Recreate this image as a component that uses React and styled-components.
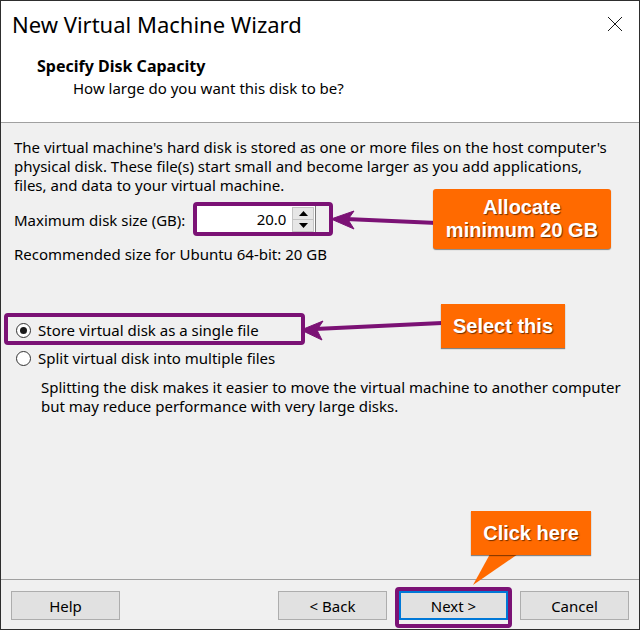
import React from 'react';
import styled, { createGlobalStyle } from 'styled-components';

const GlobalStyle = createGlobalStyle`
  html, body {
    margin: 0;
    padding: 0;
    background: #ffffff;
  }
  body {
    font-family: "Noto Sans", Roboto, sans-serif;
    color: #000000;
  }
`;

const PURPLE = '#7b1275';
const ORANGE = '#ff6a00';

const Window = styled.div`
  position: relative;
  width: 640px;
  height: 630px;
  box-sizing: border-box;
  border: 1px solid #2e2e2e;
  display: flex;
  flex-direction: column;
  background: #f0f0f0;
  overflow: hidden;
`;

const Header = styled.header`
  height: 121px;
  background: #ffffff;
  border-bottom: 1px solid #a0a0a0;
  display: flex;
  flex-direction: column;
`;

const TitleBar = styled.div`
  display: flex;
  align-items: center;
  justify-content: space-between;
  height: 30px;
  margin-top: 8px;
  padding: 0 16px 0 11px;
`;

const Title = styled.h1`
  margin: 0;
  font-size: 22px;
  font-weight: 400;
  line-height: 30px;
`;

const CloseButton = styled.button`
  border: 0;
  padding: 0;
  background: transparent;
  width: 16px;
  height: 16px;
  display: flex;
  margin-top: -1px;
`;

const StepTitle = styled.h2`
  margin: 17px 0 0 36px;
  font-size: 16px;
  line-height: 20px;
  font-weight: 700;
`;

const StepSubtitle = styled.p`
  margin: 2px 0 0 72px;
  font-size: 15px;
  line-height: 20px;
`;

const Content = styled.main`
  flex: 1;
  padding: 15px 8px 0 13px;
  font-size: 15px;
`;

const Text = styled.p`
  margin: ${(p) => p.$mt || 0}px 0 0 ${(p) => p.$indent || 0}px;
  line-height: 19px;
  white-space: nowrap;
`;

const SizeRow = styled.div`
  display: flex;
  align-items: center;
  gap: 11px;
  margin-top: 10px;
`;

const Highlight = styled.span`
  position: relative;
  display: inline-flex;
  align-items: center;

  &::after {
    content: '';
    position: absolute;
    top: ${(p) => p.$t}px;
    right: ${(p) => p.$r}px;
    bottom: ${(p) => p.$b}px;
    left: ${(p) => p.$l}px;
    border: 4px solid ${PURPLE};
    border-radius: 4px;
    pointer-events: none;
  }
`;

const SpinBox = styled.div`
  display: flex;
  width: 120px;
  height: 29px;
  box-sizing: border-box;
  border: 1px solid #7a7a7a;
  background: #ffffff;
`;

const SpinValue = styled.div`
  flex: 1;
  text-align: right;
  padding-right: 6px;
  line-height: 27px;
  font-size: 15px;
`;

const SpinButtons = styled.div`
  display: flex;
  flex-direction: column;
  width: 22px;
  padding: 1px 1px 1px 0;
`;

const SpinButton = styled.div`
  flex: 1;
  background: #e6e6e6;
  border: 1px solid #c4c4c4;
  display: flex;
  align-items: center;
  justify-content: center;
  & + & {
    border-top: 0;
  }
`;

const RadioGroup = styled.div`
  display: flex;
  flex-direction: column;
  margin-top: 52px;
`;

const RadioRow = styled.label`
  display: inline-flex;
  align-items: center;
  height: 28px;
  gap: 7px;
  padding-left: 2px;
`;

const RadioCircle = styled.span`
  width: 15px;
  height: 15px;
  box-sizing: border-box;
  border-radius: 50%;
  border: 1px solid #333333;
  background: #ffffff;
  display: flex;
  align-items: center;
  justify-content: center;

  &::after {
    content: '';
    width: 7px;
    height: 7px;
    border-radius: 50%;
    background: ${(p) => (p.$checked ? '#1a1a1a' : 'transparent')};
  }
`;

const Footer = styled.footer`
  border-top: 1px solid #a0a0a0;
  padding: 11px 10px 9px 10px;
  display: flex;
  justify-content: space-between;
`;

const ButtonGroup = styled.div`
  display: flex;
  gap: 12px;
`;

const Button = styled.button`
  width: 109px;
  height: 29px;
  box-sizing: border-box;
  background: #e1e1e1;
  border: ${(p) => (p.$primary ? '2px solid #0078d7' : '1px solid #adadad')};
  font-family: "Noto Sans", Roboto, sans-serif;
  font-size: 15px;
  color: #000000;
  padding: 0;
`;

const Callout = styled.div`
  position: absolute;
  left: ${(p) => p.$x}px;
  top: ${(p) => p.$y}px;
  width: ${(p) => p.$w}px;
  height: ${(p) => p.$h}px;
  background: ${ORANGE};
  border-radius: ${(p) => (p.$round ? 3 : 0)}px;
  box-shadow: 0 1px 1px rgba(0, 0, 0, 0.45);
  display: flex;
  align-items: center;
  justify-content: center;
  text-align: center;
  font-family: "Liberation Sans", Arial, sans-serif;
  font-weight: 700;
  font-size: 20px;
  line-height: 23px;
  color: #ffffff;
  text-shadow: 1px 1px 1px rgba(0, 0, 0, 0.55);
`;

const Annotations = styled.svg`
  position: absolute;
  left: -1px;
  top: -1px;
  width: 641px;
  height: 631px;
  pointer-events: none;
`;

function CloseIcon() {
  return (
    <svg width="16" height="16" viewBox="0 0 16 16">
      <path d="M1 1 L15 15 M15 1 L1 15" stroke="#1a1a1a" strokeWidth="1" fill="none" />
    </svg>
  );
}

function Triangle({ down }) {
  return (
    <svg width="9" height="5" viewBox="0 0 9 5">
      <path d={down ? 'M0 0 H9 L4.5 5 Z' : 'M0 5 H9 L4.5 0 Z'} fill="#000" />
    </svg>
  );
}

export default function App() {
  return (
    <>
      <GlobalStyle />
      <Window>
        <Header>
          <TitleBar>
            <Title>New Virtual Machine Wizard</Title>
            <CloseButton aria-label="Close">
              <CloseIcon />
            </CloseButton>
          </TitleBar>
          <StepTitle>Specify Disk Capacity</StepTitle>
          <StepSubtitle>How large do you want this disk to be?</StepSubtitle>
        </Header>

        <Content>
          <Text>
            The virtual machine's hard disk is stored as one or more files on the host computer's
            <br />
            physical disk. These file(s) start small and become larger as you add applications,
            <br />
            files, and data to your virtual machine.
          </Text>

          <SizeRow>
            <span>Maximum disk size (GB):</span>
            <Highlight $t={-3} $r={-17} $b={-2} $l={-3}>
              <SpinBox>
                <SpinValue>20.0</SpinValue>
                <SpinButtons>
                  <SpinButton>
                    <Triangle />
                  </SpinButton>
                  <SpinButton>
                    <Triangle down />
                  </SpinButton>
                </SpinButtons>
              </SpinBox>
            </Highlight>
          </SizeRow>

          <Text $mt={11}>Recommended size for Ubuntu 64-bit: 20 GB</Text>

          <RadioGroup>
            <Highlight $t={-3} $r={-46} $b={-1} $l={-10} style={{ alignSelf: 'flex-start' }}>
              <RadioRow>
                <RadioCircle $checked />
                Store virtual disk as a single file
              </RadioRow>
            </Highlight>
            <RadioRow>
              <RadioCircle />
              Split virtual disk into multiple files
            </RadioRow>
          </RadioGroup>

          <Text $mt={6} $indent={27}>
            Splitting the disk makes it easier to move the virtual machine to another computer
            <br />
            but may reduce performance with very large disks.
          </Text>
        </Content>

        <Footer>
          <Button>Help</Button>
          <ButtonGroup>
            <Button>&lt; Back</Button>
            <Highlight $t={-4} $r={-4} $b={-8} $l={-4}>
              <Button $primary>Next &gt;</Button>
            </Highlight>
            <Button>Cancel</Button>
          </ButtonGroup>
        </Footer>

        <Annotations viewBox="0 0 641 631">
          <g stroke={PURPLE} strokeWidth="4" fill={PURPLE} strokeLinejoin="round">
            <line x1="437" y1="223" x2="346" y2="219" />
            <polygon points="331,219 354,211 348,219.5 354,229" strokeWidth="1" />
            <line x1="442" y1="323" x2="315" y2="329" />
            <polygon points="301,330 323,321 317,330 322,340" strokeWidth="1" />
          </g>
          <polygon points="490,554 518,554 473,585" fill={ORANGE} />
        </Annotations>

        <Callout $x={432} $y={188} $w={178} $h={60} $round>
          Allocate
          <br />
          minimum 20 GB
        </Callout>
        <Callout $x={440} $y={303} $w={124} $h={44}>
          Select this
        </Callout>
        <Callout $x={470} $y={510} $w={120} $h={44}>
          Click here
        </Callout>
      </Window>
    </>
  );
}
